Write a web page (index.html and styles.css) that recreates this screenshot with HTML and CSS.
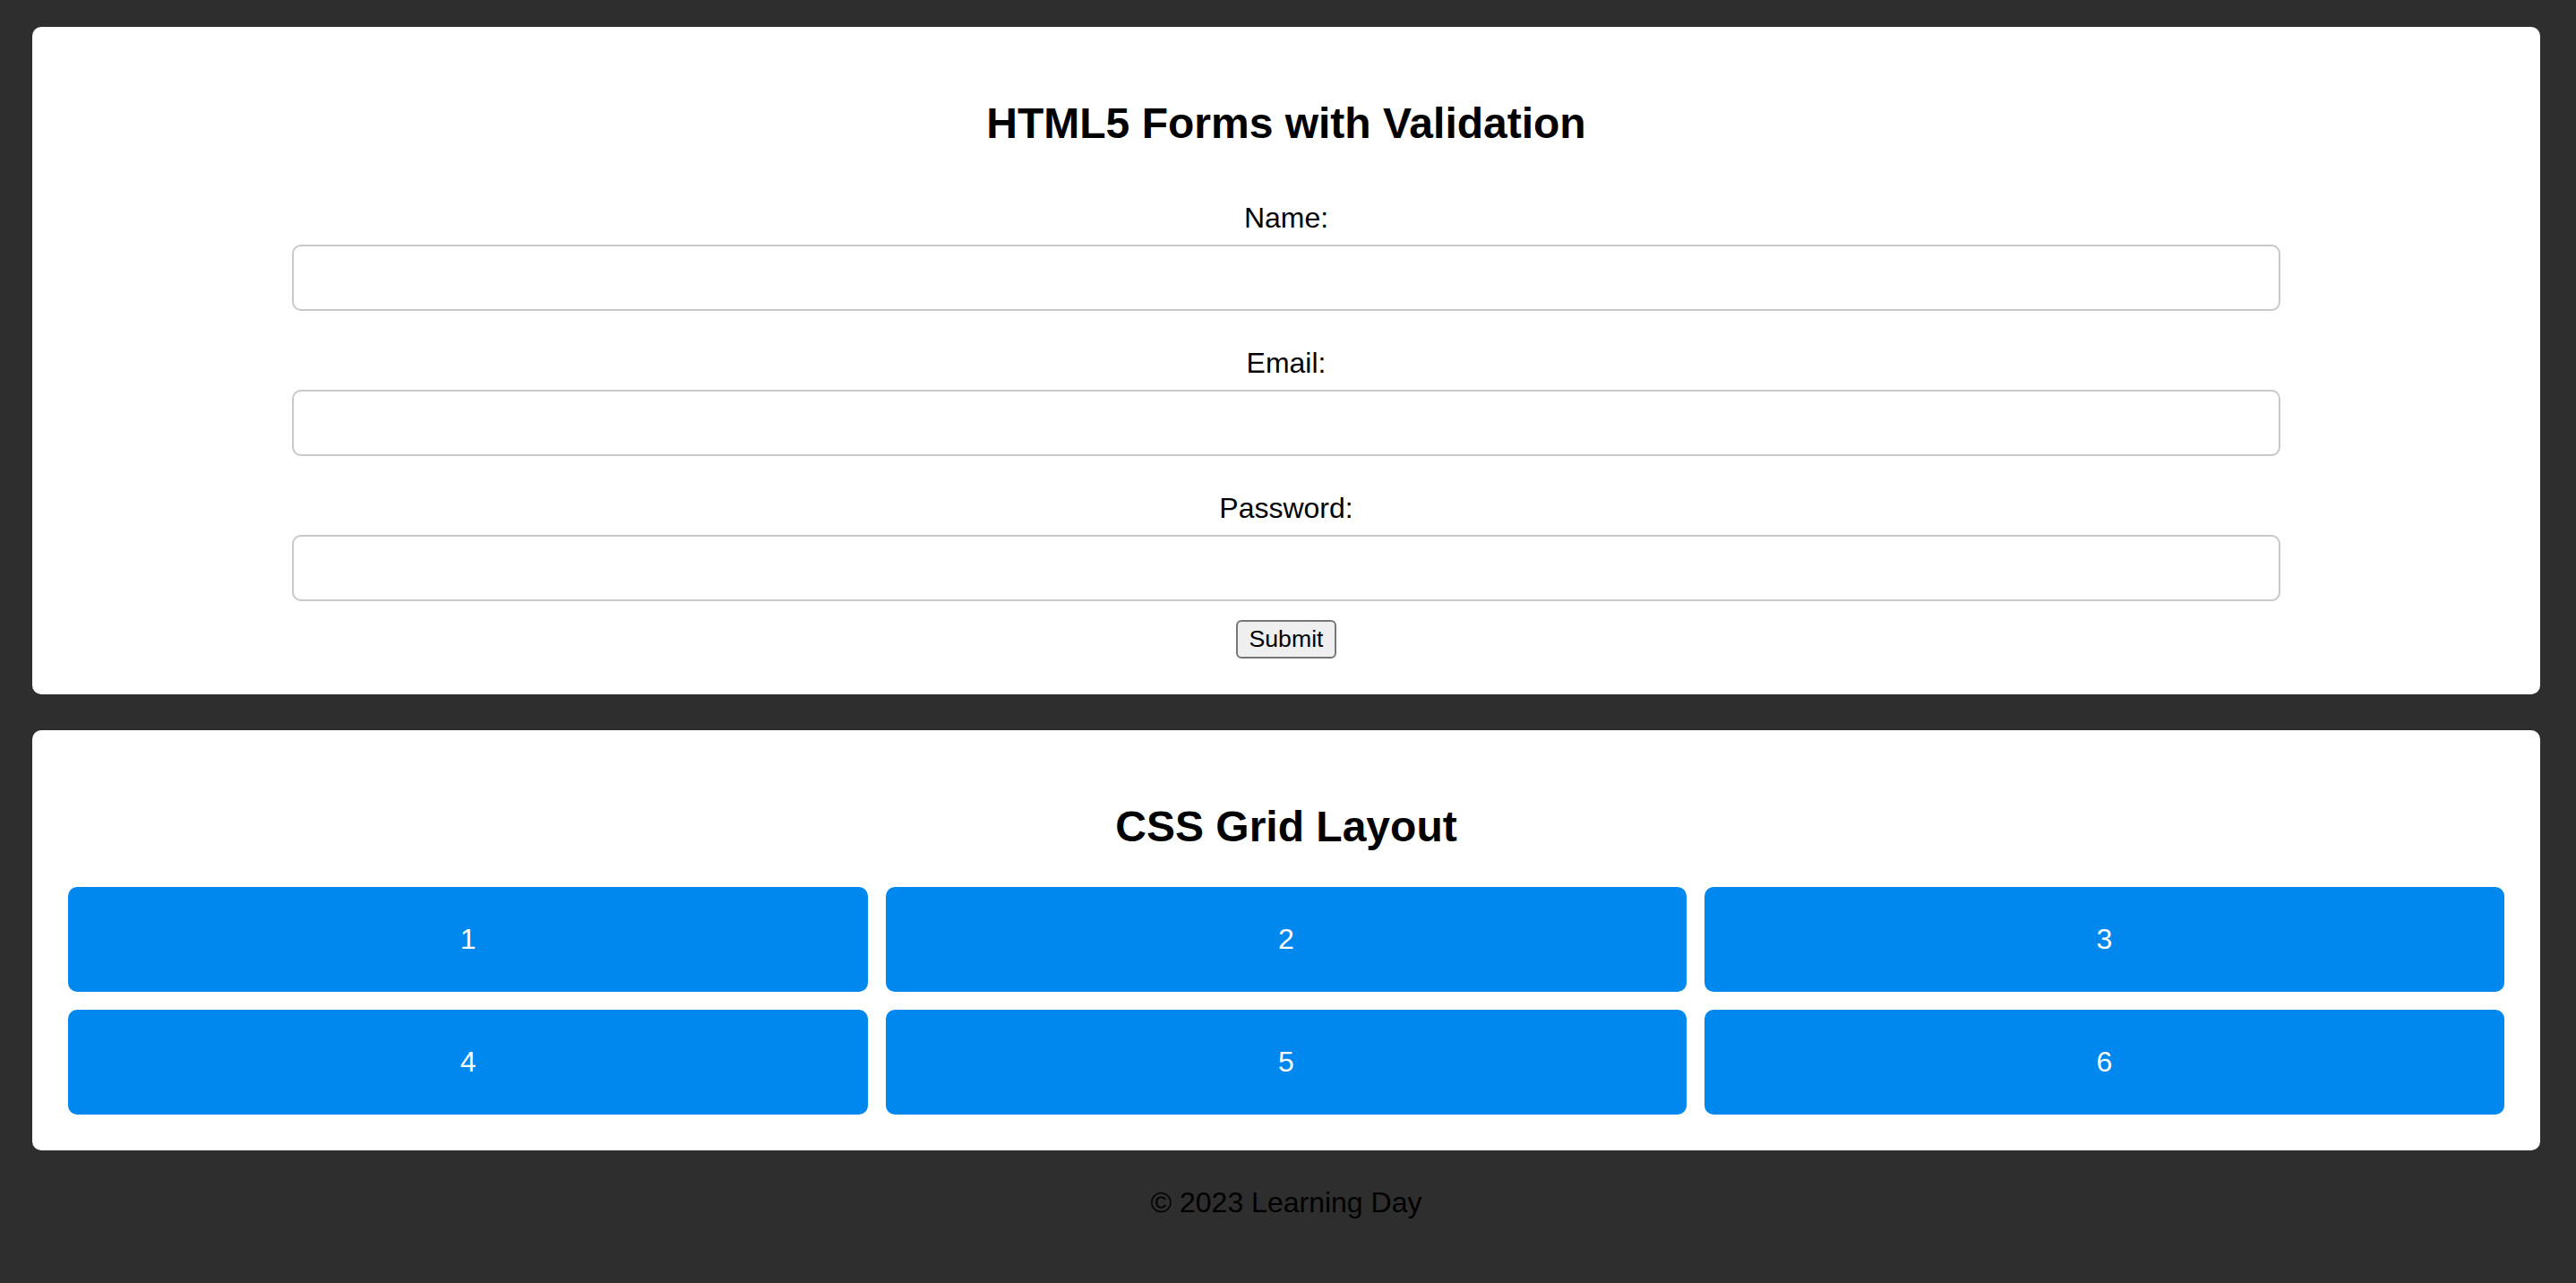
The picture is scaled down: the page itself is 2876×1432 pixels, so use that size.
FILE: index.html
```html
<!DOCTYPE html>
<html lang="en">
<head>
<meta charset="utf-8">
<title>Learning Day</title>
<link rel="stylesheet" href="styles.css">
</head>
<body>
<main class="page">
  <section class="card">
    <h2 class="card-title">HTML5 Forms with Validation</h2>
    <form class="form" onsubmit="return false;">
      <label class="form-label" for="name">Name:</label>
      <input class="form-input" type="text" id="name" name="name" required>
      <label class="form-label" for="email">Email:</label>
      <input class="form-input" type="email" id="email" name="email" required>
      <label class="form-label" for="password">Password:</label>
      <input class="form-input" type="password" id="password" name="password" required>
      <button class="form-button" type="submit">Submit</button>
    </form>
  </section>
  <section class="card">
    <h2 class="card-title">CSS Grid Layout</h2>
    <div class="grid">
      <div class="grid-item">1</div>
      <div class="grid-item">2</div>
      <div class="grid-item">3</div>
      <div class="grid-item">4</div>
      <div class="grid-item">5</div>
      <div class="grid-item">6</div>
    </div>
  </section>
  <footer class="footer">&copy; 2023 Learning Day</footer>
</main>
</body>
</html>
```
FILE: styles.css
```css
html, body {
  margin: 0;
  padding: 0;
}

body {
  background: #2e2e2e;
  font-family: "Liberation Sans", Arial, sans-serif;
  color: #000;
}

.page {
  padding: 30px 40px 0 36px;
  display: flex;
  flex-direction: column;
}

.card {
  background: #fff;
  border-radius: 10px;
  padding: 40px;
  margin-bottom: 40px;
}

.card-title {
  font-size: 48px;
  font-weight: bold;
  line-height: normal;
  text-align: center;
  margin: 40px 0;
}

.form {
  display: flex;
  flex-direction: column;
  align-items: center;
}

.form-label {
  font-size: 32px;
  line-height: normal;
  margin-top: 20px;
}

.form-input {
  box-sizing: border-box;
  width: calc(80% + 44px);
  height: 74px;
  margin: 11px 0 20px;
  padding: 20px;
  border: 2px solid #c8c8c8;
  border-radius: 10px;
  background: #fff;
  font-family: "Liberation Sans", Arial, sans-serif;
  font-size: 26.67px;
  outline: none;
}

.form-button {
  margin-top: 1px;
  padding: 4px 13px;
  border: 2px solid #767676;
  border-radius: 6px;
  background: #efefef;
  color: #000;
  font-family: "Liberation Sans", Arial, sans-serif;
  font-size: 26.67px;
  line-height: normal;
}

.grid {
  display: grid;
  grid-template-columns: repeat(3, 1fr);
  gap: 20px;
}

.grid-item {
  background: #0088ee;
  color: #fff;
  border-radius: 10px;
  padding: 40px;
  font-size: 32px;
  line-height: normal;
  text-align: center;
}

.footer {
  padding: 0 0 40px;
  font-size: 32px;
  line-height: normal;
  text-align: center;
  color: #000;
}
```
